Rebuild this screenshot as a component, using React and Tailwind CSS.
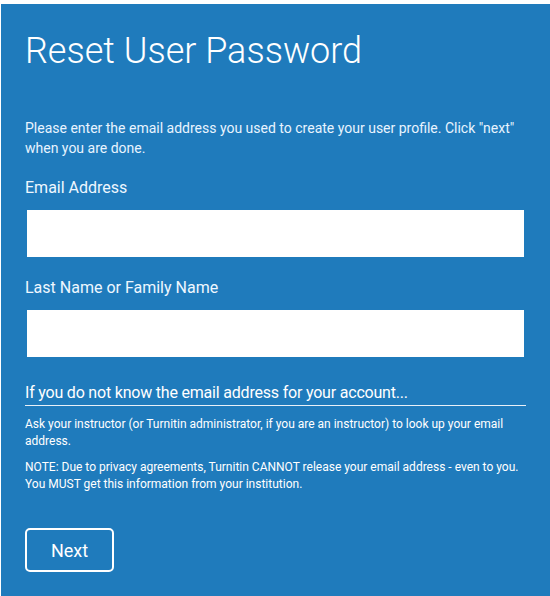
import React from "react";

export default function App() {
  return (
    <div className="bg-white pt-[4px] pl-[1px] w-[550px] h-[596px] overflow-hidden">
      <div
        className="bg-[#1f7bbc] h-[592px] pl-[24px] pr-[24px] text-white"
        style={{ fontFamily: "Roboto, 'Liberation Sans', sans-serif" }}
      >
        <h1 className="pt-[25px] text-[36px] leading-[44px] font-light">
          Reset User Password
        </h1>

        <p className="mt-[45px] text-[14px] leading-[20px] text-[#e8f4ff]">
          Please enter the email address you used to create your user profile. Click "next" when you are done.
        </p>

        <label className="block mt-[20px] text-[16px] leading-[20px] text-[#eef7ff]">
          Email Address
        </label>
        <input
          type="text"
          className="block mt-[12px] ml-[2px] w-[497px] h-[47px] bg-white outline-none"
        />

        <label className="block mt-[21px] text-[16px] leading-[20px] text-[#eef7ff]">
          Last Name or Family Name
        </label>
        <input
          type="text"
          className="block mt-[12px] ml-[2px] w-[497px] h-[47px] bg-white outline-none"
        />

        <h2 className="mt-[25px] w-[501px] text-[16px] tracking-[-0.2px] leading-[22px] pb-[1px] border-b border-[#e8f0f8]">
          If you do not know the email address for your account...
        </h2>

        <p className="mt-[10px] text-[12px] leading-[17px] font-normal">
          Ask your instructor (or Turnitin administrator, if you are an instructor) to look up your email address.
        </p>
        <p className="mt-[9px] text-[12px] leading-[17px] font-normal">
          NOTE: Due to privacy agreements, Turnitin CANNOT release your email address - even to you. You MUST get this information from your institution.
        </p>

        <button className="mt-[35px] w-[89px] h-[44px] border-2 border-white rounded-[5px] text-[18px] font-normal">
          Next
        </button>
      </div>
    </div>
  );
}
